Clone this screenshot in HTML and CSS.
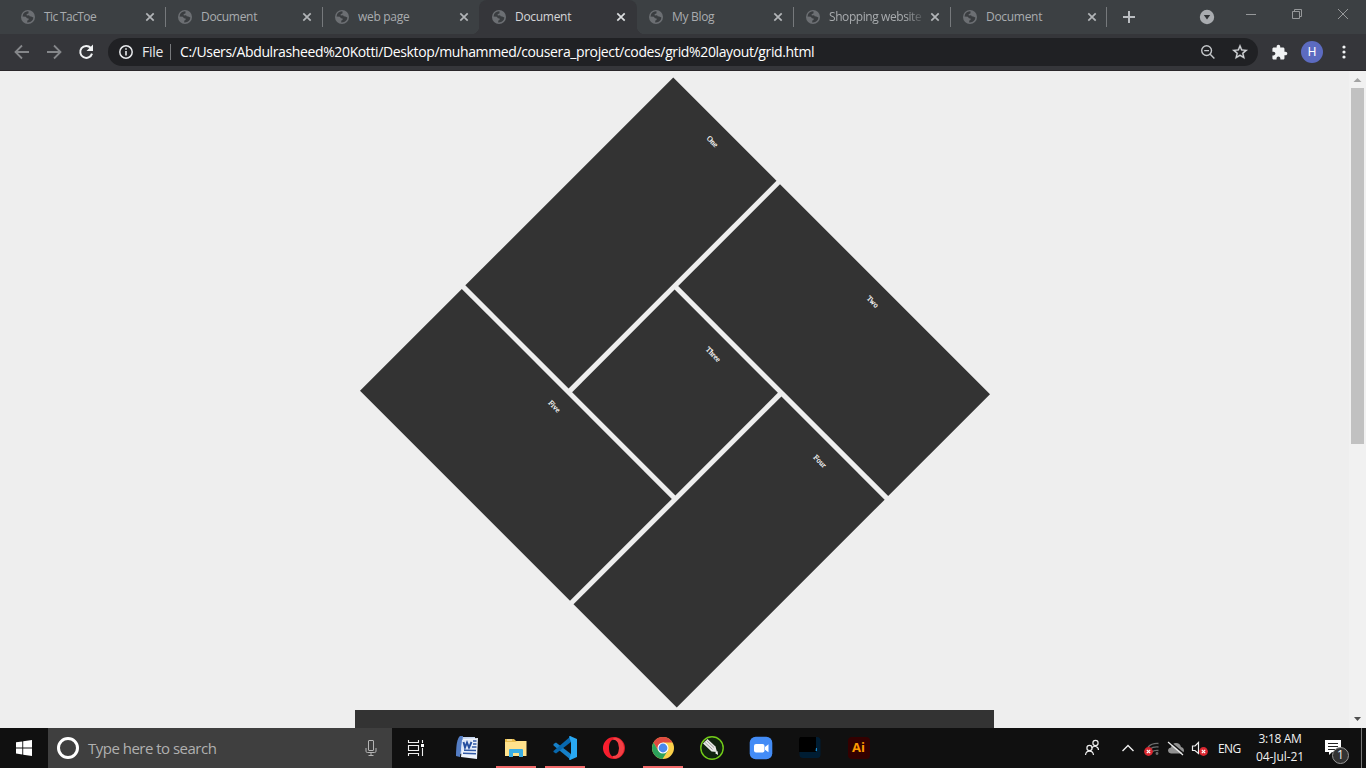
FILE: index.html
```html
<!DOCTYPE html>
<html lang="en">
<head>
<meta charset="utf-8">
<title>Document</title>
<link rel="stylesheet" href="styles.css">
</head>
<body>
<svg width="0" height="0" class="defs">
  <symbol id="globe" viewBox="0 0 14 14"><circle cx="7" cy="7" r="7" fill="#6c6f73"/><path d="M7.4 1.3C5.400 1.200 3.400 2.200 2.200 4L1.500 6.600L4.800 6.800L6 8.200L7.600 8.600V10L6.300 10.600L6.200 12.600C8.600 12.700 10.800 11.500 11.900 9.600L12.400 7.400L10.200 6.600L8.600 6.200L8.200 5.200L5.800 5.600L5.600 4.200L7.600 3.200Z" fill="#3a3d40"/></symbol>
  <symbol id="x" viewBox="0 0 10 10"><path d="M1.300 1.300L8.700 8.700M8.700 1.300L1.300 8.700" stroke="currentColor" stroke-width="1.700"/></symbol>
</svg>
<header class="tabs">
  <div class="tab"><svg class="fav"><use href="#globe"/></svg><span class="title tight">Tic TacToe</span><svg class="close"><use href="#x"/></svg></div>
  <div class="tab"><svg class="fav"><use href="#globe"/></svg><span class="title">Document</span><svg class="close"><use href="#x"/></svg></div>
  <div class="tab plain"><svg class="fav"><use href="#globe"/></svg><span class="title">web page</span><svg class="close"><use href="#x"/></svg></div>
  <div class="tab active"><svg class="fav"><use href="#globe"/></svg><span class="title">Document</span><svg class="close"><use href="#x"/></svg></div>
  <div class="tab"><svg class="fav"><use href="#globe"/></svg><span class="title">My Blog</span><svg class="close"><use href="#x"/></svg></div>
  <div class="tab"><svg class="fav"><use href="#globe"/></svg><span class="title fade">Shopping website</span><svg class="close"><use href="#x"/></svg></div>
  <div class="tab last"><svg class="fav"><use href="#globe"/></svg><span class="title">Document</span><svg class="close"><use href="#x"/></svg></div>
  <svg class="newtab" viewBox="0 0 44 34"><path d="M22 11V23M16 17H28" stroke="#babdc1" stroke-width="2"/></svg>
  <svg class="windowctl" viewBox="0 0 180 34"><circle cx="21" cy="17" r="7.200" fill="#a9acb0"/><path d="M17.800 15H24.200L21 19.500Z" fill="#303336"/><g fill="none" stroke="#96989a"><path d="M60 14.500H70M106.500 11.500H113.500V18.500H106.500ZM108.500 11V9.500H115.500V16.500H114M152 9L162 19M162 9L152 19"/></g></svg>
</header>
<nav class="toolbar">
  <svg class="navicons" viewBox="0 0 108 36"><g fill="none" stroke-width="1.800"><path d="M29 18H16M22 11.500L15.500 18L22 24.500M47 18H60M54 11.500L60.500 18L54 24.500" stroke="#85878a"/><path d="M90.800 14A6 6 0 1 0 92 19.600" stroke="#f1f3f4" stroke-width="2"/></g><path d="M93 10.500V17H86.500Z" fill="#f1f3f4"/></svg>
  <div class="omnibox">
    <svg class="info" viewBox="0 0 14 14"><circle cx="7" cy="7" r="6.200" fill="none" stroke="#e8eaed" stroke-width="1.500"/><path d="M7 3.200V4.800M7 6V10.600" stroke="#e8eaed" stroke-width="1.600"/></svg>
    <span class="file">File</span><span class="url">C:/Users/Abdulrasheed%20Kotti/Desktop/muhammed/cousera_project/codes/grid%20layout/grid.html</span>
    <svg class="zoom" viewBox="0 0 16 16"><g fill="none" stroke="#c4c7ca" stroke-width="1.400"><circle cx="6.600" cy="6.600" r="4.900"/><path d="M10.200 10.200L14.400 14.400M4.200 6.600H9"/></g></svg>
    <svg class="star" viewBox="1.500 1.500 21 21"><path d="M22 9.240l-7.190-.62L12 2 9.190 8.630 2 9.240l5.460 4.730L5.820 21 12 17.270 18.180 21l-1.630-7.030L22 9.240zM12 15.400l-3.760 2.270 1-4.280-3.320-2.880 4.380-.38L12 6.100l1.710 4.040 4.380.38-3.320 2.880 1 4.280L12 15.400z" fill="#d5d7da" stroke="#d5d7da" stroke-width=".4"/></svg>
  </div>
  <svg class="puzzle" viewBox="0 0 24 24"><path d="M20.500 11H19V7c0-1.100-.9-2-2-2h-4V3.500C13 2.120 11.880 1 10.500 1S8 2.120 8 3.500V5H4c-1.100 0-1.990.9-1.990 2v3.800H3.500c1.490 0 2.700 1.210 2.700 2.700s-1.210 2.700-2.700 2.700H2V20c0 1.100.9 2 2 2h3.800v-1.500c0-1.490 1.210-2.700 2.700-2.700s2.700 1.210 2.700 2.700V22H17c1.100 0 2-.9 2-2v-4h1.500c1.380 0 2.500-1.120 2.500-2.500S21.880 11 20.500 11z" fill="#f1f3f4"/></svg>
  <span class="avatar">H</span>
  <svg class="dots" viewBox="0 0 4 16"><g fill="#f1f3f4"><circle cx="2" cy="3" r="1.600"/><circle cx="2" cy="8" r="1.600"/><circle cx="2" cy="13" r="1.600"/></g></svg>
</nav>
<div class="viewport">
  <main class="page">
    <div class="grid">
      <div class="item one">One</div>
      <div class="item two">Two</div>
      <div class="item three">Three</div>
      <div class="item four">Four</div>
      <div class="item five">Five</div>
    </div>
    <div class="next"></div>
  </main>
  <div class="scrollbar">
    <svg class="arrow" viewBox="0 0 17 17"><path d="M4.500 11H12.500L8.500 7Z" fill="#a3a3a3"/></svg>
    <div class="thumb"></div>
    <svg class="arrow" viewBox="0 0 17 17"><path d="M5 6H12L8.500 10Z" fill="#505050"/></svg>
  </div>
</div>
<footer class="taskbar">
  <div class="start"><svg width="16" height="16" viewBox="0 0 16 16"><path d="M0 2.300L6.300 1.400V7.400H0ZM7.200 1.200L16 0V7.400H7.200ZM0 8.400H6.300V14.500L0 13.600ZM7.200 8.400H16V16L7.200 14.700Z" fill="#fff"/></svg></div>
  <div class="search">
    <span class="ring"></span><span class="hint">Type here to search</span>
    <svg class="mic" viewBox="0 0 12 16"><g fill="none" stroke="#b5b5b5"><rect x="3.500" y=".5" width="5" height="10" rx=".5"/><path d="M1 8V11.200Q1 12.500 2.500 12.500H9.500Q11 12.500 11 11.200V8M6 12.500V15.500M3.500 15.500H8.500"/></g></svg>
  </div>
  <div class="taskview"><svg width="18" height="16" viewBox="0 0 18 16"><g fill="none" stroke="#eee" stroke-width="1.100"><path d="M1.500 0V2.500H11.500V0M1.500 16V13.500H11.500V16M1.500 5.500H11.500V10.500H1.500ZM15.500 0V3M15.500 8V16"/></g><path d="M14 4H17V7H14Z" fill="#fff"/></svg></div>
  <div class="app"><svg viewBox="0 0 24 24"><path d="M5 1H20V16L4 18Z" fill="#c3d4ef"/><path d="M5 0H8L5 21L1 20Q1 3 5 0Z" fill="#547dc4"/><path d="M8 3L23 2L22 23L6 21Z" fill="#edf3fc"/><path d="M7 4H17V13L6 14Z" fill="#dfe9f8"/><path d="M18 5H21.500M18 8H21.500M17 11H21.500M9 14.300L21 14.500M8 17.300L21 17.700" stroke="#3159a5" stroke-width="1.600"/><path d="M8.500 6L10 11.500L12 6.500L14 11.500L16.500 6" fill="none" stroke="#254f9f" stroke-width="1.900"/></svg></div>
  <div class="app running"><svg viewBox="0 0 24 24"><path d="M1 3H10L12 5H22V20H1Z" fill="#e9bd4d"/><path d="M1 6H11L13 5H22.500V20H1Z" fill="#ffe28c"/><path d="M3 4H8" stroke="#fff6cf"/><path d="M5 21V14Q5 13 6 13H18Q19 13 19 14V21H15V17H9V21Z" fill="#3aaee4"/></svg></div>
  <div class="app running"><svg viewBox="0 0 24 24"><path d="M0.500 8L3 6.500L18 18V24L0.500 9.500Z" fill="#1680c9"/><path d="M0.500 15L18 0V6L3 17.500L0.500 16Z" fill="#0868ae"/><path d="M17 0L24 3V21L17 24L16 23.500L18 18V6L16 .5Z" fill="#29a8f2"/></svg></div>
  <div class="app"><svg viewBox="0 0 24 24"><defs><linearGradient id="op" x1="0" x2="1"><stop stop-color="#ff1f30"/><stop offset="1" stop-color="#d41621"/></linearGradient></defs><path fill-rule="evenodd" d="M12 1A11 11 0 1 0 12 23A11 11 0 1 0 12 1ZM12 3.500C15 3.500 17 7 17 12S15 20.500 12 20.500S7 17 7 12S9 3.500 12 3.500Z" fill="url(#op)"/><path d="M14 1.400A11 11 0 0 1 14 22.600Q10 22 11 20Q17 20 17 12Q17 4 11 3.500Q11 1.500 14 1.400Z" fill="#f34045"/></svg></div>
  <div class="app running"><svg viewBox="0 0 24 24"><circle cx="12" cy="12" r="11" fill="#fbd04a"/><path d="M2.500 6.500A11 11 0 0 1 21.600 6.600H12L7.300 14.700Z" fill="#df4a40"/><path d="M2.500 6.500A11 11 0 0 0 11.500 23L16.700 14.700L12 17L7.300 14.700Z" fill="#2ca25b"/><circle cx="12" cy="12" r="5.500" fill="#fff"/><circle cx="12" cy="12" r="4.400" fill="#4a89ee"/></svg></div>
  <div class="app"><svg viewBox="0 0 24 24"><circle cx="12" cy="12" r="11.200" fill="#10230f" stroke="#72cb19" stroke-width="1.400"/><path d="M3 7.500L7.500 3L15.500 10.500L17 16L11.500 15.500Z" fill="#e9ebe8"/><path d="M4.500 6L12.500 13.500M6.500 4.500L14 11.500" stroke="#888" stroke-width=".8"/><path d="M15 17L17.500 15L18 19Z" fill="#fff"/></svg></div>
  <div class="app"><svg viewBox="0 0 24 24"><rect x=".7" y=".7" width="22.600" height="22.600" rx="6" fill="#438cf6"/><rect x="5" y="8" width="10.500" height="8.500" rx="2" fill="#fff"/><path d="M16 11L19.500 8.300V16.200L16 13.700Z" fill="#fff"/></svg></div>
  <div class="app"><svg viewBox="0 0 24 24"><rect x="1.500" y="1" width="21" height="21" rx="3.500" fill="#001d33"/><path d="M2 1H18V16H1V3Z" fill="#000"/><path d="M18 12H19V15H17.500Z" fill="#1687c9"/></svg></div>
  <div class="app"><span class="ai">Ai</span></div>
  <svg class="tray" viewBox="1076 0 142 40">
    <g fill="none" stroke="#eee" stroke-width="1.200"><circle cx="1095.500" cy="15" r="2.600"/><path d="M1091.500 20Q1094 17.600 1096 18.500Q1098.500 19.500 1098.500 22"/><circle cx="1089.500" cy="20" r="2.600"/><path d="M1085.500 27Q1086 23.200 1089.500 23.200T1093.500 27"/><path d="M1122.500 23L1128 17.500L1133.500 23" stroke-width="1.400"/></g>
    <g fill="none" stroke="#6e6e6e" stroke-width="1.300"><path d="M1148 19Q1152 15 1158.500 15.500M1150 21Q1153 18.500 1158.500 19M1152 24Q1154 22 1158.500 22.500"/><circle cx="1157" cy="25.500" r=".8"/></g>
    <circle cx="1148.500" cy="23.500" r="4.400" fill="#da2730"/><path d="M1146.800 21.800L1150.200 25.200M1150.200 21.800L1146.800 25.200" stroke="#fff" stroke-width="1.200"/>
    <path d="M1171 25.500Q1168 25 1168 22Q1168.500 19.500 1171 19.500Q1172 15 1176 15Q1180 15 1181 19Q1184 19.500 1184 23Q1183.500 25.500 1181 25.500Z" fill="#919191"/><path d="M1169.500 13.500L1184 25.500" stroke="#111" stroke-width="1.400"/><path d="M1168 14L1183 27" stroke="#eee" stroke-width="1.200"/>
    <path d="M1192.500 18H1195L1198.500 14.500V25.500L1195 22.500H1192.500Z" fill="none" stroke="#eee" stroke-width="1.200"/><circle cx="1203.500" cy="23.500" r="4.400" fill="#da2730"/><path d="M1201.800 21.800L1205.200 25.200M1205.200 21.800L1201.800 25.200" stroke="#fff" stroke-width="1.200"/>
  </svg>
  <span class="lang">ENG</span>
  <div class="clock"><span>3:18 AM</span><span class="date">04-Jul-21</span></div>
  <div class="notice"><svg width="16" height="16" viewBox="0 0 16 16"><path d="M0 0H16V12H7L4 15V12H0Z" fill="#fff"/><path d="M3 3.500H13M3 6.500H13M3 9.500H10" stroke="#222"/></svg><span class="badge">1</span></div>
</footer>
</body>
</html>
```
FILE: styles.css
```css
* { box-sizing: border-box; }
body { margin: 0; width: 1366px; height: 768px; overflow: hidden; display: flex; flex-direction: column; font-family: "Open Sans", "Noto Sans", sans-serif; background: #eee; }
svg { display: block; flex: none; }
.defs { position: absolute; }

.tabs { height: 34px; flex: none; display: flex; padding-left: 8px; background: #3c4043; color: #a9acaf; }
.tab { width: 157px; flex: none; display: flex; align-items: center; padding-left: 13px; position: relative; }
.tab::after { content: ""; width: 1px; height: 20px; background: #76797c; margin-left: 10px; flex: none; }
.last::after { margin-left: 9px; }
.plain::after, .active::after { background: none; }
.fav { width: 14px; height: 14px; margin-right: 9px; flex: none; }
.title { width: 101px; flex: none; font-size: 12px; line-height: 18px; letter-spacing: -0.3px; white-space: nowrap; }
.tight { letter-spacing: -0.6px; }
.fade { letter-spacing: -0.42px; -webkit-mask-image: linear-gradient(90deg, #000 76%, transparent 96%); mask-image: linear-gradient(90deg, #000 76%, transparent 96%); }
.close { width: 10px; height: 10px; color: #b2b5b8; flex: none; }
.active { width: 158px; margin-right: -1px; background: #35363a; border-radius: 8px 8px 0 0; color: #d5d7d9; }
.active::before { content: ""; position: absolute; left: -8px; right: -8px; bottom: 0; height: 8px; background: radial-gradient(circle at 0 0, transparent 8px, #35363a 8.500px) left / 8px 8px no-repeat, radial-gradient(circle at 100% 0, transparent 8px, #35363a 8.500px) right / 8px 8px no-repeat; }
.active .close { color: #dcdee0; }
.newtab { width: 44px; height: 34px; }
.windowctl { width: 180px; height: 34px; margin-left: auto; }

.toolbar { height: 37px; flex: none; display: flex; align-items: center; background: #35363a; border-bottom: 1px solid #292629; }
.navicons { width: 108px; height: 36px; }
.omnibox { width: 1150px; height: 28px; border-radius: 14px; background: #202124; color: #fff; display: flex; align-items: center; padding-left: 11px; font-size: 14px; line-height: 20px; }
.info { width: 14px; height: 14px; margin-right: 9px; }
.file { width: 29px; height: 16px; line-height: 16px; border-right: 1px solid #77797c; color: #e8eaed; letter-spacing: -0.3px; }
.url { margin-left: 9px; letter-spacing: -0.375px; white-space: nowrap; }
.zoom { width: 16px; height: 16px; margin-left: auto; margin-right: 16px; }
.star { width: 16px; height: 16px; margin-right: 10px; }
.puzzle { width: 17px; height: 17px; margin-left: 13px; }
.avatar { width: 22px; height: 22px; border-radius: 50%; background: #5c6bc0; color: #fff; font: 12px/22px Roboto, sans-serif; text-align: center; margin-left: 13px; }
.dots { width: 4px; height: 16px; margin-left: 19px; }

.viewport { height: 657px; flex: none; display: flex; overflow: hidden; }
.page { width: 1349px; padding-top: 100px; overflow: hidden; }
.grid { width: 448px; height: 443px; margin: 0 auto; display: grid; grid-template: repeat(3, 1fr) / repeat(3, 1fr); gap: 5px; transform: rotate(45deg); color: #fff; font: 7.6px "Liberation Serif", serif; -webkit-text-stroke: .2px #fff; text-align: center; }
.item { background: #333; padding-top: 13.4px; min-height: 0; }
.one { grid-area: 1 / 1 / 3 / 2; }
.two { grid-area: 1 / 2 / 2 / 4; }
.three { grid-area: 2 / 2; }
.four { grid-area: 2 / 3 / 4 / 4; }
.five { grid-area: 3 / 1 / 4 / 3; }
.next { width: 639px; height: 100px; margin: 96px auto 0; background: #333; }
.scrollbar { width: 17px; display: flex; flex-direction: column; background: #f1f1f1; }
.arrow { width: 17px; height: 17px; }
.thumb { width: 13px; height: 356px; margin: 0 2px auto; background: #c1c1c1; }

.taskbar { height: 40px; flex: none; display: flex; align-items: center; background: #101010; color: #f0f0f0; }
.start { width: 48px; padding-left: 16px; }
.search { width: 344px; height: 40px; display: flex; align-items: center; padding: 0 15px 0 9px; background: #3f3f3f; color: #b0b0b0; }
.ring { width: 22px; height: 22px; border: 3px solid #fff; border-radius: 50%; margin-right: 9px; }
.hint { font-size: 15px; line-height: 24px; letter-spacing: -0.51px; }
.mic { width: 12px; height: 16px; margin-left: auto; }
.taskview { width: 50px; padding-left: 15px; }
.app { width: 49px; height: 40px; display: grid; place-items: center; }
.app svg { width: 24px; height: 24px; }
.running { background: linear-gradient(#f16a6a, #f16a6a) 50% 100% / 40px 2px no-repeat; }
.ai { width: 22px; height: 22px; border-radius: 4px; background: #300; color: #ff9a00; font: bold 13px/20px "Open Sans", sans-serif; text-align: center; }
.tray { width: 142px; height: 40px; margin-left: auto; }
.lang { width: 30px; font-size: 12px; letter-spacing: -0.6px; }
.clock { width: 64px; display: flex; flex-direction: column; align-items: center; font-size: 12px; line-height: 18px; letter-spacing: -0.35px; white-space: nowrap; }
.date { letter-spacing: -0.1px; }
.notice { width: 50px; height: 40px; border-right: 1px solid #777; padding: 12px 0 0 13px; margin-right: 4px; position: relative; }
.badge { position: absolute; left: 20px; top: 19px; width: 17px; height: 17px; border: 1px solid #999; border-radius: 50%; background: #333; font-size: 12px; line-height: 14px; text-align: center; }
```
